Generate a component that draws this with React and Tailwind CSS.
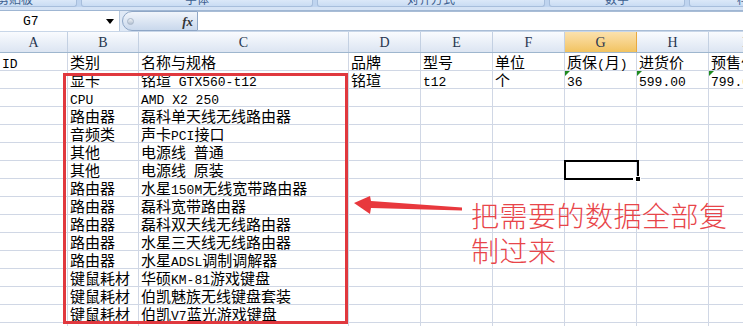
import React from 'react';

const colW = ['w-[68px]', 'w-[71px]', 'w-[210px]', 'w-[72px]', 'w-[72px]', 'w-[72px]', 'w-[72px]', 'w-[72px]', 'w-[72px]'];
const letters = ['A', 'B', 'C', 'D', 'E', 'F', 'G', 'H', 'I'];

const rows = [
  ['ID', '类别', '名称与规格', '品牌', '型号', '单位', '质保(月)', '进货价', '预售价'],
  ['', '显卡', '铭瑄 GTX560-t12', '铭瑄', 't12', '个', '36', '599.00', '799.00'],
  ['', 'CPU', 'AMD X2 250'],
  ['', '路由器', '磊科单天线无线路由器'],
  ['', '音频类', '声卡PCI接口'],
  ['', '其他', '电源线 普通'],
  ['', '其他', '电源线 原装'],
  ['', '路由器', '水星150M无线宽带路由器'],
  ['', '路由器', '磊科宽带路由器'],
  ['', '路由器', '磊科双天线无线路由器'],
  ['', '路由器', '水星三天线无线路由器'],
  ['', '路由器', '水星ADSL调制调解器'],
  ['', '键鼠耗材', '华硕KM-81游戏键盘'],
  ['', '键鼠耗材', '伯凯魅族无线键盘套装'],
  ['', '键鼠耗材', '伯凯V7蓝光游戏键盘'],
  [],
];

function Txt({ t }) {
  if (!t) return null;
  const parts = t.split(/([\x20-\x7e]+)/).filter(Boolean);
  return parts.map((p, i) =>
    /^[\x20-\x7e]+$/.test(p) ? (
      <span key={i} className="font-['Liberation_Mono'] text-[13px]">{p}</span>
    ) : (
      <span key={i}>{p}</span>
    )
  );
}

function RibbonBox({ w, label }) {
  return (
    <div className={`${w} h-[7px] shrink-0 overflow-hidden rounded-b-[3px] border border-t-0 border-[#a7bedc] bg-gradient-to-b from-[#dbe8f8] to-[#c9dcf3] flex items-end justify-center`}>
      <span className="text-[12px] leading-[12px] text-[#3d5f8f] font-['Noto_Sans_CJK_SC'] mb-[1px]">{label}</span>
    </div>
  );
}

export default function App() {
  return (
    <div className="relative w-[743px] h-[326px] overflow-hidden bg-white font-['Noto_Sans_CJK_SC',sans-serif] text-black">
      {/* ribbon bottom strip */}
      <div className="h-[7px] flex gap-[4px] bg-[#bfd4ef]">
        <div className="ml-[-47px] flex gap-[4px]">
          <RibbonBox w="w-[124px]" label="剪贴板" />
          <RibbonBox w="w-[232px]" label="字体" />
          <RibbonBox w="w-[228px]" label="对齐方式" />
          <RibbonBox w="w-[136px]" label="数字" />
          <RibbonBox w="w-[120px]" label="样式" />
        </div>
      </div>
      <div className="h-[4px] bg-[#d5e3f5] border-b border-[#9fb6d3]" />

      {/* formula bar */}
      <div className="h-[20px] flex bg-[#dfe9f6]">
        <div className="w-[120px] shrink-0 bg-white border-r border-[#b8c9de] flex items-center">
          <span className="pl-[23px] font-['Liberation_Mono'] text-[13px] leading-none text-black">G7</span>
          <span className="ml-auto mr-[5px] w-0 h-0 border-l-[4px] border-r-[4px] border-t-[5px] border-l-transparent border-r-transparent border-t-black" />
        </div>
        <div className="ml-[2px] w-[76px] shrink-0 rounded-l-full border border-[#8ea6c6] bg-gradient-to-b from-[#f1f5fb] to-[#c9d8ec] flex items-center">
          <span className="ml-[4px] w-[7px] h-[7px] rounded-full bg-gradient-to-b from-[#eef2f7] to-[#b4c1d1] border border-[#a9b7c9]" />
          <span className="ml-auto mr-[4px] font-['Liberation_Serif'] italic font-bold text-[13px] leading-none text-[#333]">fx</span>
        </div>
        <div className="flex-1 bg-white border-y border-[#a9bdd6]" />
      </div>
      <div className="h-[1px] bg-[#c8d6e8]" />

      {/* column headers */}
      <div className="h-[21px] flex border-b border-[#9eb6ce]">
        {letters.map((l, i) => (
          <div
            key={l}
            className={`${colW[i]} shrink-0 h-full flex items-center justify-center font-['Liberation_Serif'] text-[14px] text-[#27364f] border-r ${
              l === 'G'
                ? 'bg-gradient-to-b from-[#fbe1ad] to-[#f2c35f] border-[#e9a93f]'
                : 'bg-gradient-to-b from-[#f9fbfe] to-[#dce5f2] border-[#c3d0e2]'
            }`}
          >
            {l}
          </div>
        ))}
      </div>

      {/* rows */}
      <div className="flex flex-col">
        {rows.map((r, ri) => (
          <div key={ri} className="h-[18px] flex border-b border-[#d0d7e5]">
            {letters.map((l, ci) => (
              <div
                key={l}
                className={`${colW[ci]} shrink-0 h-full relative border-r border-[#d0d7e5] pl-[2px] whitespace-nowrap text-[15px] leading-[17px]`}
              >
                {ri === 1 && ci >= 6 && (
                  <span className="absolute left-0 top-0 w-0 h-0 border-t-[5px] border-r-[5px] border-t-[#1f8a1f] border-r-transparent" />
                )}
                <Txt t={r[ci]} />
              </div>
            ))}
          </div>
        ))}
      </div>

      {/* selected cell G7 */}
      <div className="absolute left-[564px] top-[160px] w-[75px] h-[20px] border-2 border-black" />
      <div className="absolute left-[633px] top-[176px] w-[3px] h-[5px] bg-white" />
      <div className="absolute left-[635px] top-[176px] w-[6px] h-[6px] bg-black border border-white" />

      {/* annotations */}
      <svg className="absolute inset-0 pointer-events-none" width="743" height="326" viewBox="0 0 743 326">
        <rect x="64.5" y="74.5" width="282" height="248" fill="none" stroke="#e0383e" strokeWidth="3" />
        <polygon
          points="354,203 370,196 371,201 462,207.5 462,210.5 371,208 370,214"
          fill="#e8383d"
        />
      </svg>
      <div className="absolute left-[471px] top-[198px] text-[28px] leading-[35px] tracking-[0.5px] font-light text-[#e8454a] whitespace-nowrap">
        把需要的数据全部复
        <br />
        制过来
      </div>
    </div>
  );
}
